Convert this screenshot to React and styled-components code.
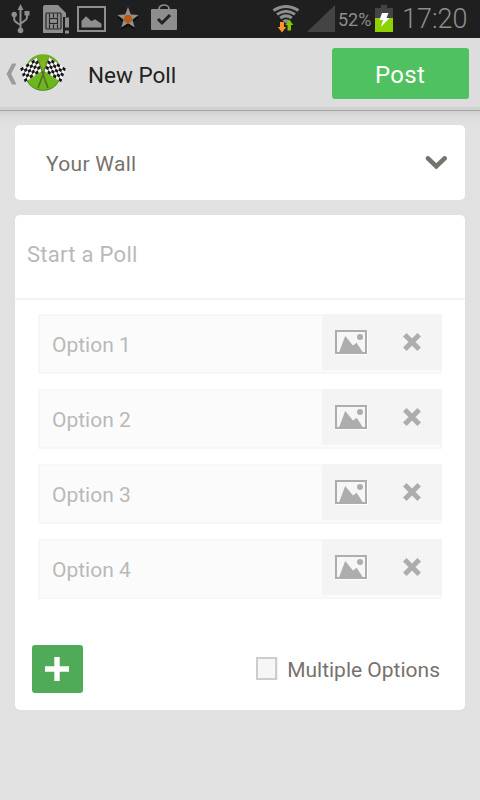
import React from "react"
import styled, { createGlobalStyle } from "styled-components"

const options = ["Option 1", "Option 2", "Option 3", "Option 4"]

const UsbIcon = () => (
  <svg width="20" height="32" viewBox="0 0 20 32" fill="#8e8e8e">
    <path d="M9.5 0l3 6h-6z" />
    <path
      d="M9.5 5v22M3.2 11v4.5q0 2 6.3 5.5M16 9v4.5q0 2.5-6.5 6"
      fill="none"
      stroke="#8e8e8e"
      strokeWidth="2"
    />
    <circle cx="3.2" cy="10.5" r="2.7" />
    <rect x="13.5" y="7" width="5" height="4.5" />
    <circle cx="9.5" cy="26.5" r="2.8" />
  </svg>
)

const SimIcon = () => (
  <svg width="28" height="32" viewBox="0 0 28 32">
    <path d="M2 0h13l8 8v4h-3v16H0V2q0-2 2-2z" fill="#8e8e8e" />
    <g fill="none" stroke="#262626" strokeWidth="1.2">
      <rect x="3" y="8" width="15" height="16" rx="1" />
      <rect x="6.5" y="13.5" width="8" height="5" />
      <path d="M6.5 8.5v4M10.5 8.5v4M14.5 8.5v4M6.5 19.5v4M10.5 19.5v4M14.5 19.5v4" />
    </g>
    <path d="M22 12.5h4v10h-4zM22 25.5h4v3h-4z" fill="#8e8e8e" />
  </svg>
)

const GalleryIcon = () => (
  <svg width="29" height="26" viewBox="0 0 29 26">
    <rect x="1" y="1" width="27" height="24" fill="none" stroke="#8e8e8e" strokeWidth="2" />
    <path d="M4.5 21.5v-6.5l4.5-4.8 5.5 5 3.5-2 6.5 4.5v3.8z" fill="#8e8e8e" />
  </svg>
)

const StarIcon = () => (
  <svg width="24" height="26" viewBox="0 0 24 26">
    <path d="M12 3l3 7.5 8 .5-6.2 5 2.2 8-7-4.5-7 4.5 2.2-8L1 11l8-.5z" fill="#0c0c0c" />
    <path d="M12 1l2.8 7.5 7.7.5-6 4.8 2.2 7.7-6.7-4.3-6.7 4.3 2.2-7.7-6-4.8 7.7-.5z" fill="#929292" />
    <circle cx="12" cy="13" r="4.3" fill="#b85a18" />
  </svg>
)

const BagIcon = () => (
  <svg width="26" height="27" viewBox="0 0 26 27">
    <path d="M8 7V5a5 4 0 0 1 10 0v2" fill="none" stroke="#8e8e8e" strokeWidth="1.7" />
    <rect y="5" width="26" height="21" rx="1" fill="#8e8e8e" />
    <path d="M7 15l4 4L19 11" fill="none" stroke="#222" strokeWidth="3" />
  </svg>
)

const WifiIcon = () => (
  <svg width="28" height="29" viewBox="0 0 28 29">
    <g fill="none" stroke="#8e8e8e" strokeWidth="3">
      <path d="M1.5 5.6Q14-2.6 26.5 5.6" />
      <path d="M5 9.4Q14 3 23 9.4" />
      <path d="M8.2 13Q14 8.8 19.8 13" />
    </g>
    <path d="M10.5 15.5Q14 12.8 17.5 15.5l-3.5 3z" fill="#8e8e8e" />
    <path d="M8 17h4v5h2.2L10 27.5 5.8 22H8z" fill="#ff9429" />
    <path d="M15.5 25.5V20h-2.2l4-5.5 4 5.5H19v5.5z" fill="#86c500" />
  </svg>
)

const BatteryIcon = () => (
  <svg width="18" height="28" viewBox="0 0 18 28">
    <path d="M6 0h6v3h6v11H0V3h6z" fill="#444" />
    <rect y="13" width="18" height="14" fill="#8fd000" />
    <path d="M7 8h6.5l-2 5h3L6 22l2-7H4.5z" fill="#fff" />
  </svg>
)

const Flag = () => {
  const cells = []
  for (let row = 0; row < 5; row++) {
    for (let col = 0; col < 6; col++) {
      if ((row + col) % 2 === 0) {
        cells.push(<rect key={`${row}-${col}`} x={col * 3.4} y={row * 3.5} width="3.4" height="3.5" />)
      }
    }
  }
  return (
    <g transform="matrix(.82 -.54 .26 .78 .2 15.6)">
      <rect width="20.4" height="17.5" fill="#f5f5f5" />
      <g fill="#161616">{cells}</g>
    </g>
  )
}

const LogoIcon = () => (
  <svg width="48" height="40" viewBox="0 0 48 40">
    <defs>
      <radialGradient id="ball" cx=".5" cy=".3" r=".7">
        <stop offset="0" stopColor="#7fbc1f" />
        <stop offset=".75" stopColor="#62a51a" />
        <stop offset="1" stopColor="#477d16" />
      </radialGradient>
    </defs>
    <circle cx="23" cy="19.5" r="18.3" fill="url(#ball)" />
    <path d="M7 26Q23 17 39 26Q35 36.5 23 37Q11 36.5 7 26z" fill="#6cb81c" />
    <path d="M17 5l11 30M29 5L18 35" stroke="#526d29" strokeWidth="1.6" />
    <Flag />
    <g transform="matrix(-1 0 0 1 46 0)">
      <Flag />
    </g>
  </svg>
)

const PictureIcon = () => (
  <svg width="33" height="25" viewBox="0 0 33 25">
    <path d="M0 24.5h32.5V1" fill="none" stroke="#fff" />
    <rect x="1" y="1" width="30" height="22" fill="#f6f6f6" stroke="#adadad" strokeWidth="2" />
    <path d="M4 22.5L10.2 6l7.8 9.5 3.6-2.8 6.4 9.8z" fill="#adadad" />
    <circle cx="25" cy="7" r="3" fill="#adadad" />
  </svg>
)

const CrossIcon = () => (
  <svg width="18" height="18" viewBox="0 0 18 18">
    <path d="M1.8 1.8l14.4 14.4M16.2 1.8L1.8 16.2" stroke="#adadad" strokeWidth="5" />
  </svg>
)

const App = () => {
  return (
    <Screen>
      <GlobalStyle />
      <StatusBar>
        <Notifications>
          <UsbIcon />
          <SimIcon />
          <GalleryIcon />
          <StarIcon />
          <BagIcon />
        </Notifications>
        <WifiIcon />
        <svg className="signal" width="28" height="27" viewBox="0 0 28 27">
          <path d="M0 27L28 0v27z" fill="#444" />
        </svg>
        <Percent>52%</Percent>
        <BatteryIcon />
        <Clock>17:20</Clock>
      </StatusBar>
      <ActionBar>
        <svg width="12" height="22" viewBox="0 0 12 22">
          <path d="M6 .5h4.5L5.2 11l5.3 10.5H6L.5 11z" fill="#9c9c9c" />
        </svg>
        <LogoIcon />
        <Title>New Poll</Title>
        <PostButton>Post</PostButton>
      </ActionBar>
      <Content>
        <WallSelect>
          <span>Your Wall</span>
          <svg width="22" height="15" viewBox="0 0 22 15">
            <path d="M3 2.4l8.3 8 8.3-8" fill="none" stroke="#76726d" strokeWidth="4.6" strokeLinecap="round" />
          </svg>
        </WallSelect>
        <Card>
          <Question>Start a Poll</Question>
          <OptionList>
            {options.map((option) => (
              <Option key={option}>
                <OptionText>{option}</OptionText>
                <OptionActions>
                  <PictureIcon />
                  <CrossIcon />
                </OptionActions>
              </Option>
            ))}
          </OptionList>
          <CardFooter>
            <AddButton>
              <svg width="24" height="26" viewBox="0 0 24 26">
                <path d="M12 1v24M0 13h24" stroke="#fff" strokeWidth="5.4" />
              </svg>
            </AddButton>
            <Multiple>
              <Checkbox />
              <span>Multiple Options</span>
            </Multiple>
          </CardFooter>
        </Card>
      </Content>
    </Screen>
  )
}

export default App

const GlobalStyle = createGlobalStyle`
  * {
    box-sizing: border-box;
  }
  body {
    margin: 0;
    font-family: Roboto, sans-serif;
  }
  svg {
    display: block;
    flex-shrink: 0;
  }
`

const Screen = styled.div`
  display: flex;
  flex-direction: column;
  width: 480px;
  height: 800px;
  overflow: hidden;
  background: #e1e1e1;
`

const StatusBar = styled.div`
  display: flex;
  align-items: flex-start;
  height: 38px;
  padding: 4px 12px 0 11px;
  background: #1f1f1f;
  color: #8e8e8e;
  > svg {
    margin-top: 1px;
  }
  .signal {
    margin: 1px 3px 0 7px;
  }
`

const Notifications = styled.div`
  display: flex;
  margin-right: auto;
  svg:nth-child(2) {
    margin: 1px 0 0 12px;
  }
  svg:nth-child(3) {
    margin: 2px 0 0 6px;
  }
  svg:nth-child(4) {
    margin: 2px 0 0 10px;
  }
  svg:nth-child(5) {
    margin-left: 11px;
  }
`

const Percent = styled.span`
  width: 37px;
  padding-top: 5px;
  font-size: 18px;
  line-height: 22px;
`

const Clock = styled.span`
  width: 66px;
  margin-left: 9px;
  font-size: 27px;
  font-weight: 300;
  line-height: 30px;
  white-space: nowrap;
`

const ActionBar = styled.div`
  display: flex;
  align-items: center;
  height: 73px;
  padding: 0 11px 2px 6px;
  background: linear-gradient(#dddddd 69px, #d2d2d2 69px, #d2d2d2 72px, #a4a4a4 72px);
  > svg:nth-child(2) {
    margin: 0 0 2px 2px;
  }
`

const Title = styled.h1`
  flex: 1;
  margin: 3px 0 0 20px;
  color: #222;
  font-size: 22.5px;
  font-weight: 400;
`

const PostButton = styled.button`
  width: 137px;
  height: 51px;
  padding: 3px 1px 0 0;
  border: 0;
  border-radius: 3px;
  background: #50c160;
  color: #fff;
  font-family: inherit;
  font-size: 24px;
  letter-spacing: 0.3px;
`

const Content = styled.div`
  display: flex;
  flex: 1;
  flex-direction: column;
  gap: 15px;
  padding: 14px 15px;
  background: linear-gradient(#d0d0d0, #dcdcdc 5px, #e1e1e1 13px);
`

const WallSelect = styled.div`
  display: flex;
  align-items: center;
  justify-content: space-between;
  height: 75px;
  padding: 2px 18px 0 31px;
  border-radius: 5px;
  background: #fff;
  color: #76726d;
  font-size: 21px;
  letter-spacing: 0.3px;
`

const Card = styled.div`
  height: 495px;
  border-radius: 5px;
  background: #fff;
`

const Question = styled.div`
  height: 85px;
  padding: 27px 12px 0;
  border-bottom: 2px solid #f3f3f3;
  color: #b9b9b9;
  font-size: 22px;
  letter-spacing: 0.28px;
  line-height: 26px;
`

const OptionList = styled.div`
  display: flex;
  flex-direction: column;
  gap: 15px;
  padding: 14px 23px 0;
`

const Option = styled.div`
  display: flex;
  justify-content: space-between;
  height: 60px;
  background: #fbfbfb;
  box-shadow: inset 0 0 0 2px #f7f7f7;
`

const OptionText = styled.span`
  padding: 17px 0 0 14px;
  color: #b9b9b9;
  font-size: 21px;
  line-height: 28px;
`

const OptionActions = styled.div`
  display: flex;
  align-items: center;
  gap: 35px;
  width: 120px;
  height: 56px;
  padding-left: 13px;
  background: #f4f4f4;
`

const CardFooter = styled.div`
  display: flex;
  align-items: center;
  justify-content: space-between;
  padding: 46px 25px 0 17px;
`

const AddButton = styled.button`
  display: flex;
  align-items: center;
  justify-content: center;
  width: 51px;
  height: 48px;
  padding: 0 2px 0 0;
  border: 0;
  border-radius: 3px;
  background: #50ab58;
`

const Multiple = styled.label`
  display: flex;
  align-items: center;
  color: #76726d;
  font-size: 21px;
  white-space: nowrap;
  span {
    margin-left: 10px;
    padding-top: 2px;
  }
`

const Checkbox = styled.i`
  width: 21px;
  height: 23px;
  margin-bottom: 1px;
  border: 2px solid #cdcdcd;
  background: #f6f6f6;
  box-shadow: 1px 0 0 #f0f0f0;
`
